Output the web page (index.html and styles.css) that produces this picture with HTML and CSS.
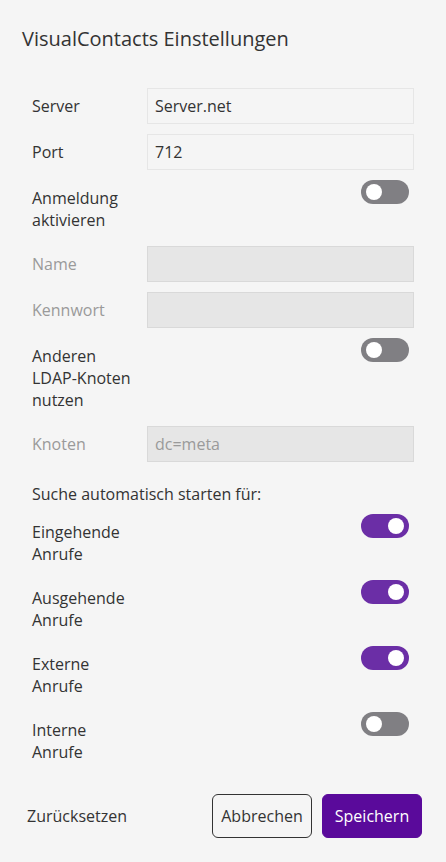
FILE: index.html
```html
<!DOCTYPE html>
<html lang="de">
<head>
<meta charset="utf-8">
<title>VisualContacts Einstellungen</title>
<link rel="stylesheet" href="styles.css">
</head>
<body>
<div class="dialog">
  <h1 class="title">VisualContacts Einstellungen</h1>
  <div class="form">
    <div class="row">
      <label class="label">Server</label>
      <div class="input">Server.net</div>
    </div>
    <div class="row">
      <label class="label">Port</label>
      <div class="input">712</div>
    </div>
    <div class="row toggle-row">
      <label class="label">Anmeldung<br>aktivieren</label>
      <span class="toggle"><span class="knob"></span></span>
    </div>
    <div class="row">
      <label class="label disabled">Name</label>
      <div class="input is-disabled"></div>
    </div>
    <div class="row">
      <label class="label disabled">Kennwort</label>
      <div class="input is-disabled"></div>
    </div>
    <div class="row toggle-row">
      <label class="label">Anderen<br>LDAP-Knoten<br>nutzen</label>
      <span class="toggle"><span class="knob"></span></span>
    </div>
    <div class="row">
      <label class="label disabled">Knoten</label>
      <div class="input is-disabled">dc=meta</div>
    </div>
    <div class="section">Suche automatisch starten für:</div>
    <div class="row toggle-row">
      <label class="label">Eingehende<br>Anrufe</label>
      <span class="toggle on"><span class="knob"></span></span>
    </div>
    <div class="row toggle-row">
      <label class="label">Ausgehende<br>Anrufe</label>
      <span class="toggle on"><span class="knob"></span></span>
    </div>
    <div class="row toggle-row">
      <label class="label">Externe<br>Anrufe</label>
      <span class="toggle on"><span class="knob"></span></span>
    </div>
    <div class="row toggle-row">
      <label class="label">Interne<br>Anrufe</label>
      <span class="toggle"><span class="knob"></span></span>
    </div>
  </div>
  <div class="footer">
    <span class="reset">Zurücksetzen</span>
    <div class="buttons">
      <button class="btn btn-cancel">Abbrechen</button>
      <button class="btn btn-save">Speichern</button>
    </div>
  </div>
</div>
</body>
</html>
```

FILE: styles.css
```css
* { box-sizing: border-box; }
html, body {
  margin: 0;
  padding: 0;
  background: #f5f5f5;
}
body {
  font-family: "Open Sans", "Noto Sans", sans-serif;
  color: #333333;
  font-size: 16px;
}
.dialog {
  width: 446px;
  height: 862px;
  padding: 25px 24px 0 22px;
}
.title {
  margin: 0;
  font-size: 20px;
  font-weight: 400;
  line-height: 28px;
  color: #333333;
}
.form {
  margin-top: 35px;
  padding: 0 8px 0 10px;
  display: flex;
  flex-direction: column;
  gap: 10px;
}
.row {
  display: flex;
  align-items: center;
}
.label {
  width: 115px;
  flex: none;
  line-height: 22px;
  color: #333333;
}
.label.disabled { color: #9a9a9a; }
.input {
  flex: 1;
  height: 36px;
  border: 1px solid #e6e6e6;
  background: #f5f5f5;
  padding: 0 7px;
  line-height: 34px;
  color: #333333;
}
.input.is-disabled {
  background: #e6e6e6;
  border-color: #d9d9d9;
  color: #9a9a9a;
}
.toggle-row {
  align-items: flex-start;
  justify-content: space-between;
}
.toggle-row .label {
  padding: 7px 0 5px;
  width: auto;
}
.toggle {
  width: 48px;
  height: 24px;
  border-radius: 12px;
  background: #807f83;
  margin-right: 5px;
  position: relative;
  flex: none;
}
.knob {
  position: absolute;
  top: 4px;
  left: 5px;
  width: 16px;
  height: 16px;
  border-radius: 50%;
  background: #ffffff;
}
.toggle.on { background: #6b2ea6; }
.toggle.on .knob { left: auto; right: 5px; }
.section {
  margin-top: 11px;
  margin-bottom: -1px;
  line-height: 22px;
}
.footer {
  margin-top: 26px;
  display: flex;
  align-items: center;
  justify-content: space-between;
  padding-left: 5px;
}
.reset {
  color: #333333;
}
.buttons {
  display: flex;
  gap: 10px;
}
.btn {
  width: 100px;
  height: 44px;
  border-radius: 6px;
  font-family: "Open Sans", "Noto Sans", sans-serif;
  font-size: 16px;
  padding: 0;
  cursor: pointer;
}
.btn-cancel {
  background: #f5f5f5;
  border: 1px solid #333333;
  color: #333333;
}
.btn-save {
  background: #5a0a9b;
  border: 1px solid #5a0a9b;
  color: #ffffff;
}
```
